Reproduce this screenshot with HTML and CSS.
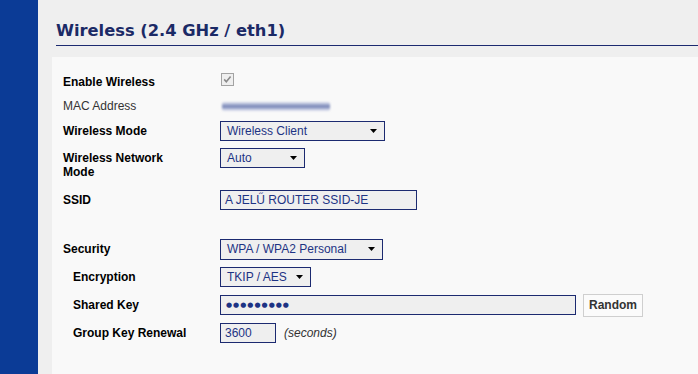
FILE: index.html
```html
<!DOCTYPE html>
<html lang="hu">
<head>
<meta charset="utf-8">
<title>Wireless</title>
<link rel="stylesheet" href="styles.css">
</head>
<body>
<div class="page">
  <aside class="sidebar"></aside>
  <main class="main">
    <h1 class="title">Wireless (2.4 GHz / eth1)</h1>
    <section class="panel">
      <div class="row h24">
        <div class="label b">Enable Wireless</div>
        <div class="field">
          <span class="checkbox"><svg width="13" height="13" viewBox="0 0 13 13"><rect x="0.5" y="0.5" width="12" height="12" fill="#efefef" stroke="#a3a3a3"/><path d="M3.2 6.4 L5.3 8.7 L9.6 3.6" fill="none" stroke="#8a8a8a" stroke-width="1.6"/></svg></span>
        </div>
      </div>
      <div class="row h24">
        <div class="label n">MAC Address</div>
        <div class="field"><span class="blur"></span></div>
      </div>
      <div class="row h26">
        <div class="label b">Wireless Mode</div>
        <div class="field"><div class="select w165"><span>Wireless Client</span><svg class="arrow" width="7" height="4" viewBox="0 0 7 4"><path d="M0 0H7L3.5 4Z" fill="#000"/></svg></div></div>
      </div>
      <div class="row h42 top">
        <div class="label b two">Wireless Network<br>Mode</div>
        <div class="field mt4"><div class="select w85"><span>Auto</span><svg class="arrow" width="7" height="4" viewBox="0 0 7 4"><path d="M0 0H7L3.5 4Z" fill="#000"/></svg></div></div>
      </div>
      <div class="row h27">
        <div class="label b">SSID</div>
        <div class="field"><div class="input w197">A JELŰ ROUTER SSID-JE</div></div>
      </div>
      <div class="spacer"></div>
      <div class="row h28">
        <div class="label b">Security</div>
        <div class="field"><div class="select w163 h21"><span>WPA / WPA2 Personal</span><svg class="arrow" width="7" height="4" viewBox="0 0 7 4"><path d="M0 0H7L3.5 4Z" fill="#000"/></svg></div></div>
      </div>
      <div class="row h28">
        <div class="label b ind">Encryption</div>
        <div class="field"><div class="select w91"><span>TKIP / AES</span><svg class="arrow" width="7" height="4" viewBox="0 0 7 4"><path d="M0 0H7L3.5 4Z" fill="#000"/></svg></div></div>
      </div>
      <div class="row h28">
        <div class="label b ind">Shared Key</div>
        <div class="field gap7"><div class="input w356 dots">●●●●●●●●●</div><button class="btn" type="button">Random</button></div>
      </div>
      <div class="row h28">
        <div class="label b ind">Group Key Renewal</div>
        <div class="field gap8"><div class="input w56">3600</div><span class="hint">(seconds)</span></div>
      </div>
    </section>
  </main>
</div>
</body>
</html>
```

FILE: styles.css
```css
html, body {
  margin: 0;
  padding: 0;
}
body {
  background: #efefef;
  font-family: "Liberation Sans", Arial, sans-serif;
  font-size: 12px;
  color: #000;
}
.page {
  display: flex;
  height: 374px;
  overflow: hidden;
}
.sidebar {
  flex: none;
  width: 38px;
  background: #0b3b96;
}
.main {
  flex: 1;
  display: flex;
  flex-direction: column;
}
.title {
  margin: 0 0 11px 18px;
  padding: 20px 0 3px 0;
  line-height: 22px;
  font-family: "DejaVu Sans", Verdana, sans-serif;
  font-size: 16.3px;
  font-weight: bold;
  color: #1b2a66;
  border-bottom: 1px solid #1c2a70;
}
.panel {
  flex: 1;
  margin-left: 14px;
  background: #f9f9f9;
  padding: 13px 0 0 11px;
}
.row {
  display: flex;
  align-items: center;
}
.row.top { align-items: flex-start; }
.h24 { height: 24px; }
.h26 { height: 26px; }
.h27 { height: 27px; }
.h28 { height: 28px; }
.h42 { height: 42px; }
.spacer { height: 22px; }
.label {
  flex: none;
  width: 157px;
  line-height: 14px;
}
.label.b { font-weight: bold; color: #000; }
.label.n { color: #333; }
.label.ind { width: 147px; padding-left: 10px; }
.label.two { margin-top: 7px; }
.field {
  display: flex;
  align-items: center;
}
.field.mt4 { margin-top: 4px; }
.field.gap7 { gap: 7px; }
.field.gap8 { gap: 8px; }
.checkbox {
  display: flex;
  margin-left: 1px;
  margin-top: -5px;
}
.blur {
  display: block;
  width: 108px;
  height: 9px;
  margin-left: 2px;
  margin-top: 1px;
  border-radius: 2px;
  background: linear-gradient(#dde1ee 0, #a3add0 30%, #7482b4 50%, #b4bcd9 75%, #e4e7f1 100%);
  filter: blur(0.8px);
}
.select, .input {
  box-sizing: border-box;
  height: 20px;
  border: 1px solid #1c2a70;
  background: #efefef;
  color: #1d3384;
  padding: 0 0 0 6px;
  line-height: 18px;
  white-space: nowrap;
}
.select {
  display: flex;
  align-items: center;
  justify-content: space-between;
  padding-right: 7px;
}
.arrow { flex: none; }
.w165 { width: 165px; }
.w85 { width: 85px; }
.w163 { width: 163px; }
.w91 { width: 91px; }
.w197 { width: 197px; }
.w356 { width: 356px; }
.w56 { width: 56px; }
.h21 { height: 21px; }
.input { padding-left: 4px; }
.dots {
  font-family: "DejaVu Sans", sans-serif;
  font-size: 7px;
  letter-spacing: 1px;
  padding-left: 5px;
  color: #1d3384;
}
.btn {
  box-sizing: border-box;
  width: 60px;
  height: 23px;
  padding: 0;
  border: 1px solid #cfcfcf;
  background: #fbfbfb;
  font-family: "Liberation Sans", Arial, sans-serif;
  font-size: 12px;
  font-weight: bold;
  color: #333;
}
.hint {
  font-style: italic;
  color: #333;
}
```
